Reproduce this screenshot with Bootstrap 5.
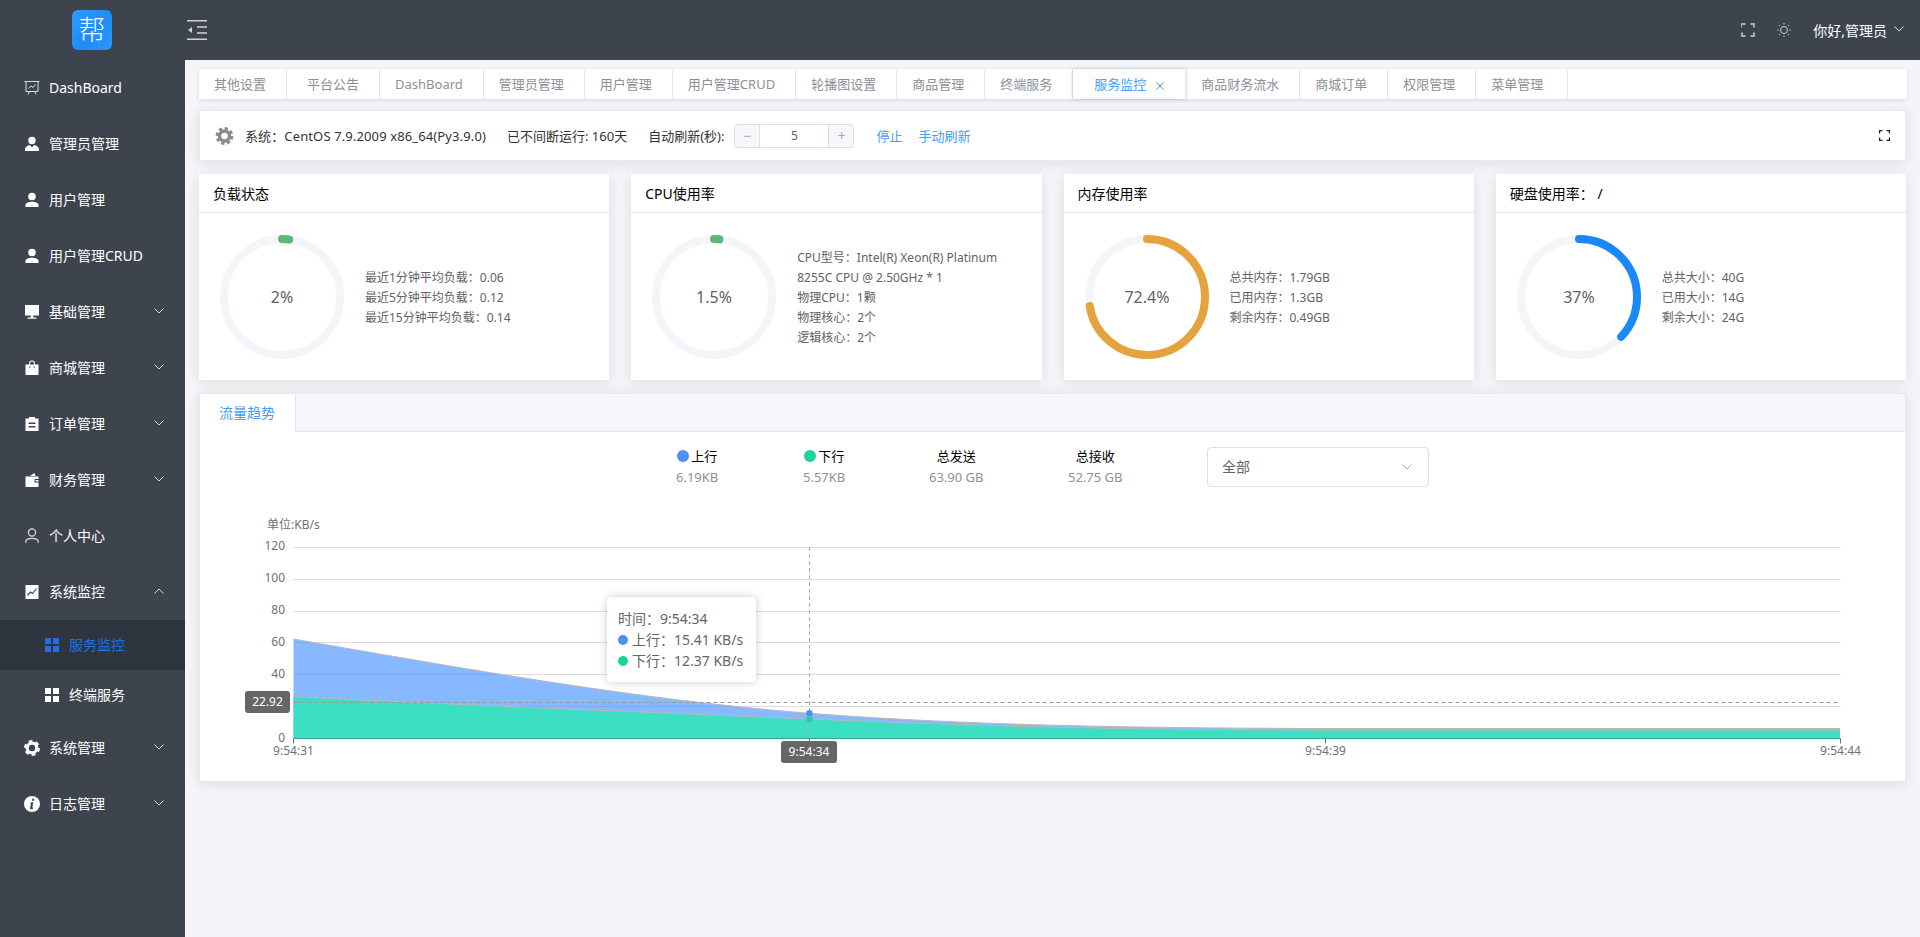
<!DOCTYPE html>
<html lang="zh-CN">
<head>
<meta charset="utf-8">
<title>服务监控</title>
<link href="https://cdn.jsdelivr.net/npm/bootstrap@5.3.0/dist/css/bootstrap.min.css" rel="stylesheet">
<style>
html,body{height:100%;overflow:hidden}
body{font-family:"Noto Sans","Noto Sans CJK SC",sans-serif;background:#f4f5f9;font-size:13px;color:#333}
.side{width:185px;flex:none;background:#3e444e;height:937px}
.logo-row{height:60px;padding-right:1px}
.logo-box{width:40px;height:40px;border-radius:6px;background:linear-gradient(135deg,#2f9bff 0%,#1f8cf8 55%,#2b97ff 100%);color:#fff;font-size:27px;line-height:40px;text-align:center;font-weight:300}
.side .nav-link{height:56px;padding:0 21px 2px 24px;color:#fff;font-size:14px;gap:9px}
.side .nav-link svg.ico{width:16px;height:16px;flex:none;fill:#fff;margin-top:2px}
.side .nav-link .chev{margin-left:auto;width:10px;height:6px;flex:none;fill:none;stroke:#d5d7da;stroke-width:1}
.side .sub-item{height:50px;padding-left:45px;gap:10px}
.side .sub-item svg.ico{width:14px;height:14px}
.side .sub-active{background:#2f353e;color:#1f6fe5}
.side .sub-active svg.ico{fill:#1f6fe5}
.topbar{height:60px;background:#3e444e;padding-left:2px}
.topbar .user-name{color:#fff;font-size:14px}
.main-area{padding:9px 14px 0}
.tab-strip{height:30px;background:#fff;box-shadow:0 1px 4px rgba(0,0,0,.12);width:1708px;margin-bottom:11px}
.tab-one{padding:0 20px 0 15px;line-height:30px;color:#8c9098;border-right:1px solid #e4e7ed;white-space:nowrap}
.tab-wide{padding-left:20px}
.tab-end{padding-right:24px}
.tab-on{color:#409eff;box-shadow:0 0 4px rgba(0,0,0,.2);position:relative;padding-left:21px;padding-right:21px}
.tool-card{height:51px;background:#fff;border:1px solid #e9ebf1;box-shadow:0 2px 12px rgba(0,0,0,.1);padding:0 15px;margin-bottom:13px;width:1707px}
.tool-txt{margin-top:2px}
.sys-txt{letter-spacing:.12px;margin-left:11px}
.stepper{width:120px;height:24px;margin-left:10px;flex-wrap:nowrap}
.stepper .btn{width:26px;padding:0;border:1px solid #dcdfe6;background:#f5f7fa;color:#a8abb2;font-size:14px;line-height:20px;border-radius:4px 0 0 4px}
.stepper .btn:last-child{border-radius:0 4px 4px 0}
.stepper .form-control{padding:0;height:24px;min-height:24px;border:1px solid #dcdfe6;font-size:12px;text-align:center;color:#606266;border-radius:0;border-left:0;border-right:0}
.act-link{color:#409eff;text-decoration:none}
.stat-row{--bs-gutter-x:22px;--bs-gutter-y:0;width:1729px;margin-bottom:13px}
.stat-card{height:206px;border:0;border-radius:0;box-shadow:0 2px 12px rgba(0,0,0,.1)}
.stat-card .card-header{height:39px;padding:0 14px;line-height:39px;background:#fff;border-bottom:1px solid #e4e7ed;border-radius:0;font-size:14px;color:#000}
.stat-card .card-body{padding:0 0 0 21px;gap:21px}
.ring-txt{font-size:16px;fill:#606266;text-anchor:middle;dominant-baseline:central}
.stat-info{font-size:12px;line-height:20px;color:#606266;width:210px;padding-top:3px}
.flow-card{height:389px;width:1707px;border:1px solid #e6e8ee;border-radius:0;box-shadow:0 2px 12px rgba(0,0,0,.1);background:#fff}
.flow-head{height:38px;background:#f5f7fa;border-bottom:1px solid #e4e7ed}
.flow-tab{width:96px;height:38px;line-height:37px;background:#fff;border-right:1px solid #e4e7ed;color:#409eff;font-size:14px;padding-left:19px}
.flow-stats{height:78px;padding-top:15px;position:relative}
.st-col{position:absolute;top:14px;text-align:center;color:#000;line-height:20px;white-space:nowrap}
.st-col span.val{display:block;color:#8e9197;margin-top:1px}
.dot{display:inline-block;width:12px;height:12px;border-radius:50%;vertical-align:-1px;margin-right:2px}
.flow-select{position:absolute;left:1007px;top:15px;width:222px;height:40px;font-size:14px;color:#606266;border:1px solid #dcdfe6;border-radius:4px;padding:0 14px 2px;background-size:10px 6px;background-position:right 16px center;background-image:url("data:image/svg+xml,%3Csvg xmlns='http://www.w3.org/2000/svg' viewBox='0 0 10 6'%3E%3Cpath d='M.5.5 5 5 9.500.5' fill='none' stroke='%23a8abb2'/%3E%3C/svg%3E")}
.chart-box{position:relative;width:1705px;height:272px}
.chart-box svg{display:block}
.ax{font-size:12px;fill:#6e7079}
.tip-box{position:absolute;left:407px;top:87px;width:149px;height:85px;background:#fff;border-radius:4px;box-shadow:0 0 10px rgba(0,0,0,.2);padding:11px 11px;font-size:14px;line-height:21px;color:#666;white-space:nowrap}
.tip-box i{display:inline-block;width:10px;height:10px;border-radius:50%;margin-right:4px}
.ax-tag{position:absolute;background:#666;color:#fff;font-size:12px;border-radius:3px;text-align:center;height:22px;line-height:22px}
</style>
</head>
<body class="d-flex">
<aside class="side d-flex flex-column">
  <div class="logo-row d-flex align-items-center justify-content-center"><div class="logo-box">帮</div></div>
  <nav class="nav flex-column">
    <a class="nav-link d-flex align-items-center" href="#"><svg class="ico" viewBox="0 0 16 16" style="fill:none;stroke:#ddd"><path d="M.5 1.500h15M2 1.500v10h12v-10M4 14.500l1.500-3M12 14.500l-1.500-3M4.500 8.500l2.500-2.500 2 1.500 2.500-3"/></svg>DashBoard</a>
    <a class="nav-link d-flex align-items-center" href="#"><svg class="ico" viewBox="0 0 16 16"><circle cx="8" cy="4.500" r="3.700"/><path d="M1 15v-1.500C1 11 3.500 9.500 6 9l2 2.500L10 9c2.500.5 5 2 5 4.500V15z"/></svg>管理员管理</a>
    <a class="nav-link d-flex align-items-center" href="#"><svg class="ico" viewBox="0 0 16 16"><circle cx="8" cy="4.500" r="3.800"/><path d="M1.500 15v-1.800C1.500 11 4.500 9.800 8 9.800s6.500 1.200 6.500 3.400V15z"/></svg>用户管理</a>
    <a class="nav-link d-flex align-items-center" href="#"><svg class="ico" viewBox="0 0 16 16"><circle cx="8" cy="4.500" r="3.800"/><path d="M1.500 15v-1.800C1.500 11 4.500 9.800 8 9.800s6.500 1.200 6.500 3.400V15z"/></svg>用户管理CRUD</a>
    <a class="nav-link d-flex align-items-center" href="#"><svg class="ico" viewBox="0 0 16 16"><path d="M1 1h14v10.500H1zM6.800 11.500h2.400v2H6.800zM3.500 13.500h9v1.300h-9z"/></svg>基础管理<svg class="chev" viewBox="0 0 10 6"><path d="M.5.500 5 5 9.500.500"/></svg></a>
    <a class="nav-link d-flex align-items-center" href="#"><svg class="ico" viewBox="0 0 16 16"><path d="M1.500 4.500h13V15h-13zM5 4.500V3.500a3 3 0 0 1 6 0v1H10v-1a2 2 0 0 0-4 0v1z"/><path d="M5.200 6.600h1.200v1.200H5.200zM9.600 6.600h1.200v1.200H9.600z" fill="#3e444e"/></svg>商城管理<svg class="chev" viewBox="0 0 10 6"><path d="M.5.500 5 5 9.500.500"/></svg></a>
    <a class="nav-link d-flex align-items-center" href="#"><svg class="ico" viewBox="0 0 16 16"><path d="M1.500 2.500h3.500V1h6v1.500h3.500V15h-13z"/><path d="M4.500 6.500h7V8h-7zM4.500 10h7v1.500h-7z" fill="#3e444e"/></svg>订单管理<svg class="chev" viewBox="0 0 10 6"><path d="M.5.500 5 5 9.500.500"/></svg></a>
    <a class="nav-link d-flex align-items-center" href="#"><svg class="ico" viewBox="0 0 16 16"><path d="M1.500 4.500h13V7H10.500v3.500h4V15h-13zM6 4 10.500 1l1 3z"/><path d="M11.500 8H14.500v1.500h-3z"/></svg>财务管理<svg class="chev" viewBox="0 0 10 6"><path d="M.5.500 5 5 9.500.500"/></svg></a>
    <a class="nav-link d-flex align-items-center" href="#"><svg class="ico" viewBox="0 0 16 16" style="fill:none;stroke:#ddd;stroke-width:1.200"><circle cx="8" cy="4.500" r="3.600"/><path d="M1.800 15v-1.500c0-2 2.500-3.200 6.200-3.200s6.200 1.200 6.200 3.200V15"/></svg>个人中心</a>
    <a class="nav-link d-flex align-items-center" href="#"><svg class="ico" viewBox="0 0 16 16"><path d="M1.500 1h13v14h-13z"/><path d="M3.500 11.500 6.500 8l2 1.500 4-5" fill="none" stroke="#3e444e" stroke-width="1.200"/></svg>系统监控<svg class="chev" viewBox="0 0 10 6"><path d="M.5 5.500 5 1 9.500 5.500"/></svg></a>
    <a class="nav-link sub-item sub-active d-flex align-items-center" href="#"><svg class="ico" viewBox="0 0 14 14"><path d="M0 0h6v6H0zM8 0h6v6H8zM0 8h6v6H0zM8 8h6v6H8z"/></svg>服务监控</a>
    <a class="nav-link sub-item d-flex align-items-center" href="#"><svg class="ico" viewBox="0 0 14 14"><path d="M0 0h6v6H0zM8 0h6v6H8zM0 8h6v6H0zM8 8h6v6H8z"/></svg>终端服务</a>
    <a class="nav-link d-flex align-items-center" href="#"><svg class="ico" viewBox="0 0 16 16"><circle cx="8" cy="8" r="4.800" fill="none" stroke="#fff" stroke-width="3.200"/><circle cx="8" cy="8" r="6.800" fill="none" stroke="#fff" stroke-width="2.400" stroke-dasharray="3.700 3.420"/></svg>系统管理<svg class="chev" viewBox="0 0 10 6"><path d="M.5.500 5 5 9.500.500"/></svg></a>
    <a class="nav-link d-flex align-items-center" href="#"><svg class="ico" viewBox="0 0 16 16"><circle cx="8" cy="8" r="8"/><path d="M8.300 2.800h2l-.4 2h-2zM7.300 6.200h2.100L8.200 11.500h1l-.3 1.600H5.900l1.100-5.400H6z" fill="#3e444e"/></svg>日志管理<svg class="chev" viewBox="0 0 10 6"><path d="M.5.500 5 5 9.500.500"/></svg></a>
  </nav>
</aside>
<div class="flex-grow-1 d-flex flex-column">
  <header class="topbar d-flex align-items-center">
    <svg width="20" height="20" viewBox="0 0 20 20" fill="none" stroke="#cfd1d4" stroke-width="1.500"><path d="M0 .7h20M10 7h10M10 13h10M0 19.300h20"/><path d="M1 10l4-3v6z" fill="#cfd1d4" stroke="none"/></svg>
    <svg class="ms-auto" width="14" height="14" viewBox="0 0 14 14" fill="none" stroke="#a9acb0" stroke-width="2"><path d="M0 4.500V1h4.500M9.500 1H13V4.500M13 9.500V13H9.500M4.500 13H1V9.500"/></svg>
    <svg style="margin-left:22px" width="14" height="14" viewBox="0 0 14 14" fill="none" stroke="#c8cacd"><circle cx="7" cy="7" r="3.500"/><path d="M7 0v1.500M7 12.500V14M0 7h1.500M12.500 7H14M2 2l1 1M11 11l1 1M2 12l1-1M11 3l1-1"/></svg>
    <span class="user-name" style="margin-left:22px">你好,管理员</span>
    <svg style="margin:0 17px 2px 7px" width="10" height="6" viewBox="0 0 10 6" fill="none" stroke="#d5d7da"><path d="M.5.500 5 5 9.500.500"/></svg>
  </header>
  <main class="main-area">
    <div class="tab-strip d-flex">
      <div class="tab-one">其他设置</div><div class="tab-one tab-wide">平台公告</div><div class="tab-one">DashBoard</div><div class="tab-one">管理员管理</div><div class="tab-one">用户管理</div><div class="tab-one">用户管理CRUD</div><div class="tab-one">轮播图设置</div><div class="tab-one">商品管理</div><div class="tab-one">终端服务</div>
      <div class="tab-one tab-on">服务监控<svg style="margin-left:10px" width="8" height="8" viewBox="0 0 8 8" fill="none" stroke="#409eff"><path d="M.5.500l7 7M7.500.500l-7 7"/></svg></div>
      <div class="tab-one">商品财务流水</div><div class="tab-one">商城订单</div><div class="tab-one">权限管理</div><div class="tab-one tab-end">菜单管理</div>
    </div>
    <div class="tool-card d-flex align-items-center">
      <svg width="19" height="18" viewBox="0 0 19 18"><circle cx="9.500" cy="9" r="5" fill="none" stroke="#8a8a8a" stroke-width="3.500"/><circle cx="9.500" cy="9" r="7.400" fill="none" stroke="#8a8a8a" stroke-width="3" stroke-dasharray="3.200 2.610"/></svg>
      <span class="tool-txt sys-txt">系统：CentOS 7.9.2009 x86_64(Py3.9.0)</span>
      <span class="tool-txt" style="margin-left:21px">已不间断运行: 160天</span>
      <span class="tool-txt" style="margin-left:21px">自动刷新(秒):</span>
      <div class="input-group stepper"><button class="btn" type="button">−</button><input class="form-control" value="5" aria-label="秒"><button class="btn" type="button">+</button></div>
      <a class="act-link tool-txt" style="margin-left:22px" href="#">停止</a>
      <a class="act-link tool-txt" style="margin-left:16px" href="#">手动刷新</a>
      <svg class="ms-auto" style="margin-right:0" width="11" height="11" viewBox="0 0 11 11" fill="none" stroke="#222" stroke-width="1.200"><path d="M.6 3.500V.6H3.500M7.500.6h2.900V3.500M10.400 7.500v2.900H7.500M3.500 10.400H.6V7.500"/></svg>
    </div>
    <div class="row stat-row">
      <div class="col-3"><div class="card stat-card"><div class="card-header">负载状态</div><div class="card-body d-flex align-items-center">
        <svg width="124" height="124" viewBox="0 0 124 124" class="flex-none"><circle cx="62" cy="62" r="58" fill="none" stroke="#f4f5f9" stroke-width="8"/><circle cx="62" cy="62" r="58" fill="none" stroke="#5cb87a" stroke-width="8" stroke-linecap="round" transform="rotate(-90 62 62)" style="stroke-dasharray:7.300 364.4"/><text class="ring-txt" x="62" y="62">2%</text></svg>
        <div class="stat-info">最近1分钟平均负载：0.06<br>最近5分钟平均负载：0.12<br>最近15分钟平均负载：0.14</div></div></div></div>
      <div class="col-3"><div class="card stat-card"><div class="card-header">CPU使用率</div><div class="card-body d-flex align-items-center">
        <svg width="124" height="124" viewBox="0 0 124 124"><circle cx="62" cy="62" r="58" fill="none" stroke="#f4f5f9" stroke-width="8"/><circle cx="62" cy="62" r="58" fill="none" stroke="#5cb87a" stroke-width="8" stroke-linecap="round" transform="rotate(-90 62 62)" style="stroke-dasharray:5.500 364.4"/><text class="ring-txt" x="62" y="62">1.5%</text></svg>
        <div class="stat-info">CPU型号：Intel(R) Xeon(R) Platinum<br>8255C CPU @ 2.50GHz * 1<br>物理CPU：1颗<br>物理核心：2个<br>逻辑核心：2个</div></div></div></div>
      <div class="col-3"><div class="card stat-card"><div class="card-header">内存使用率</div><div class="card-body d-flex align-items-center">
        <svg width="124" height="124" viewBox="0 0 124 124"><circle cx="62" cy="62" r="58" fill="none" stroke="#f4f5f9" stroke-width="8"/><circle cx="62" cy="62" r="58" fill="none" stroke="#e6a23c" stroke-width="8" stroke-linecap="round" transform="rotate(-90 62 62)" style="stroke-dasharray:263.800 364.4"/><text class="ring-txt" x="62" y="62">72.4%</text></svg>
        <div class="stat-info">总共内存：1.79GB<br>已用内存：1.3GB<br>剩余内存：0.49GB</div></div></div></div>
      <div class="col-3"><div class="card stat-card"><div class="card-header">硬盘使用率： /</div><div class="card-body d-flex align-items-center">
        <svg width="124" height="124" viewBox="0 0 124 124"><circle cx="62" cy="62" r="58" fill="none" stroke="#f4f5f9" stroke-width="8"/><circle cx="62" cy="62" r="58" fill="none" stroke="#1989fa" stroke-width="8" stroke-linecap="round" transform="rotate(-90 62 62)" style="stroke-dasharray:134.800 364.4"/><text class="ring-txt" x="62" y="62">37%</text></svg>
        <div class="stat-info">总共大小：40G<br>已用大小：14G<br>剩余大小：24G</div></div></div></div>
    </div>
    <section class="flow-card">
      <div class="flow-head"><div class="flow-tab">流量趋势</div></div>
      <div class="flow-stats">
        <div class="st-col" style="left:476px"><span class="dot" style="background:#4e8ff5"></span>上行<span class="val">6.19KB</span></div>
        <div class="st-col" style="left:603px"><span class="dot" style="background:#1ad39d"></span>下行<span class="val">5.57KB</span></div>
        <div class="st-col" style="left:729px">总发送<span class="val">63.90 GB</span></div>
        <div class="st-col" style="left:868px">总接收<span class="val">52.75 GB</span></div>
        <select class="form-select flow-select" aria-label="全部"><option>全部</option></select>
      </div>
      <div class="chart-box">
        <svg width="1705" height="272" viewBox="200 510 1705 272">
          <g stroke="#dcdde0"><path d="M293.500 547.500H1840.500M293.500 579.500H1840.500M293.500 611.500H1840.500M293.500 642.500H1840.500M293.500 674.500H1840.500M293.500 706.500H1840.500"/></g>
          <path d="M293.500 639C465 669 640 700 809.400 713.300C950 724 1100 728 1325 728.500L1840 728.500V738H293.500Z" fill="#3f8cff" fill-opacity=".62"/>
          <path d="M293.500 639C465 669 640 700 809.400 713.300C950 724 1100 728 1325 728.500L1840 728.500" fill="none" stroke="#b8b8b8"/>
          <path d="M293.500 696.700C465 705 640 712 809.400 719C950 725 1100 730 1325 730L1840 730V738H293.500Z" fill="#3ddfc4"/>
          <path d="M293.500 696.700C465 705 640 712 809.400 719C950 725 1100 730 1325 730L1840 730" fill="none" stroke="#b8b8b8"/>
          <path d="M293.500 738.500H1840.500" stroke="#39a596"/>
          <path d="M293.500 738.500v5M809.500 738.500v5M1325.500 738.500v5M1840.500 738.500v5" stroke="#6e7079"/>
          <path d="M809.500 547V738" stroke="#aaa" stroke-dasharray="4 3"/>
          <path d="M293.500 702.500H1840.500" stroke="#999" stroke-dasharray="4 3"/>
          <circle cx="809.400" cy="713.300" r="3.200" fill="#4e8ff5"/><circle cx="809.400" cy="719" r="3.200" fill="#1ad39d"/>
          <text class="ax" x="267" y="529">单位:KB/s</text>
          <g class="ax" text-anchor="end"><text x="285" y="550.300">120</text><text x="285" y="582.300">100</text><text x="285" y="614.300">80</text><text x="285" y="646.300">60</text><text x="285" y="678.300">40</text><text x="285" y="742.300">0</text></g>
          <g class="ax" text-anchor="middle"><text x="293.500" y="755">9:54:31</text><text x="1325.500" y="755">9:54:39</text><text x="1840.500" y="755">9:54:44</text></g>
        </svg>
        <div class="ax-tag" style="left:45px;top:181px;width:45px">22.92</div>
        <div class="ax-tag" style="left:581px;top:231px;width:56px">9:54:34</div>
        <div class="tip-box">时间：9:54:34<br><i style="background:#4e8ff5"></i>上行：15.41 KB/s<br><i style="background:#1ad39d"></i>下行：12.37 KB/s</div>
      </div>
    </section>
  </main>
</div>
<script src="https://cdn.jsdelivr.net/npm/bootstrap@5.3.0/dist/js/bootstrap.bundle.min.js"></script>
</body>
</html>
